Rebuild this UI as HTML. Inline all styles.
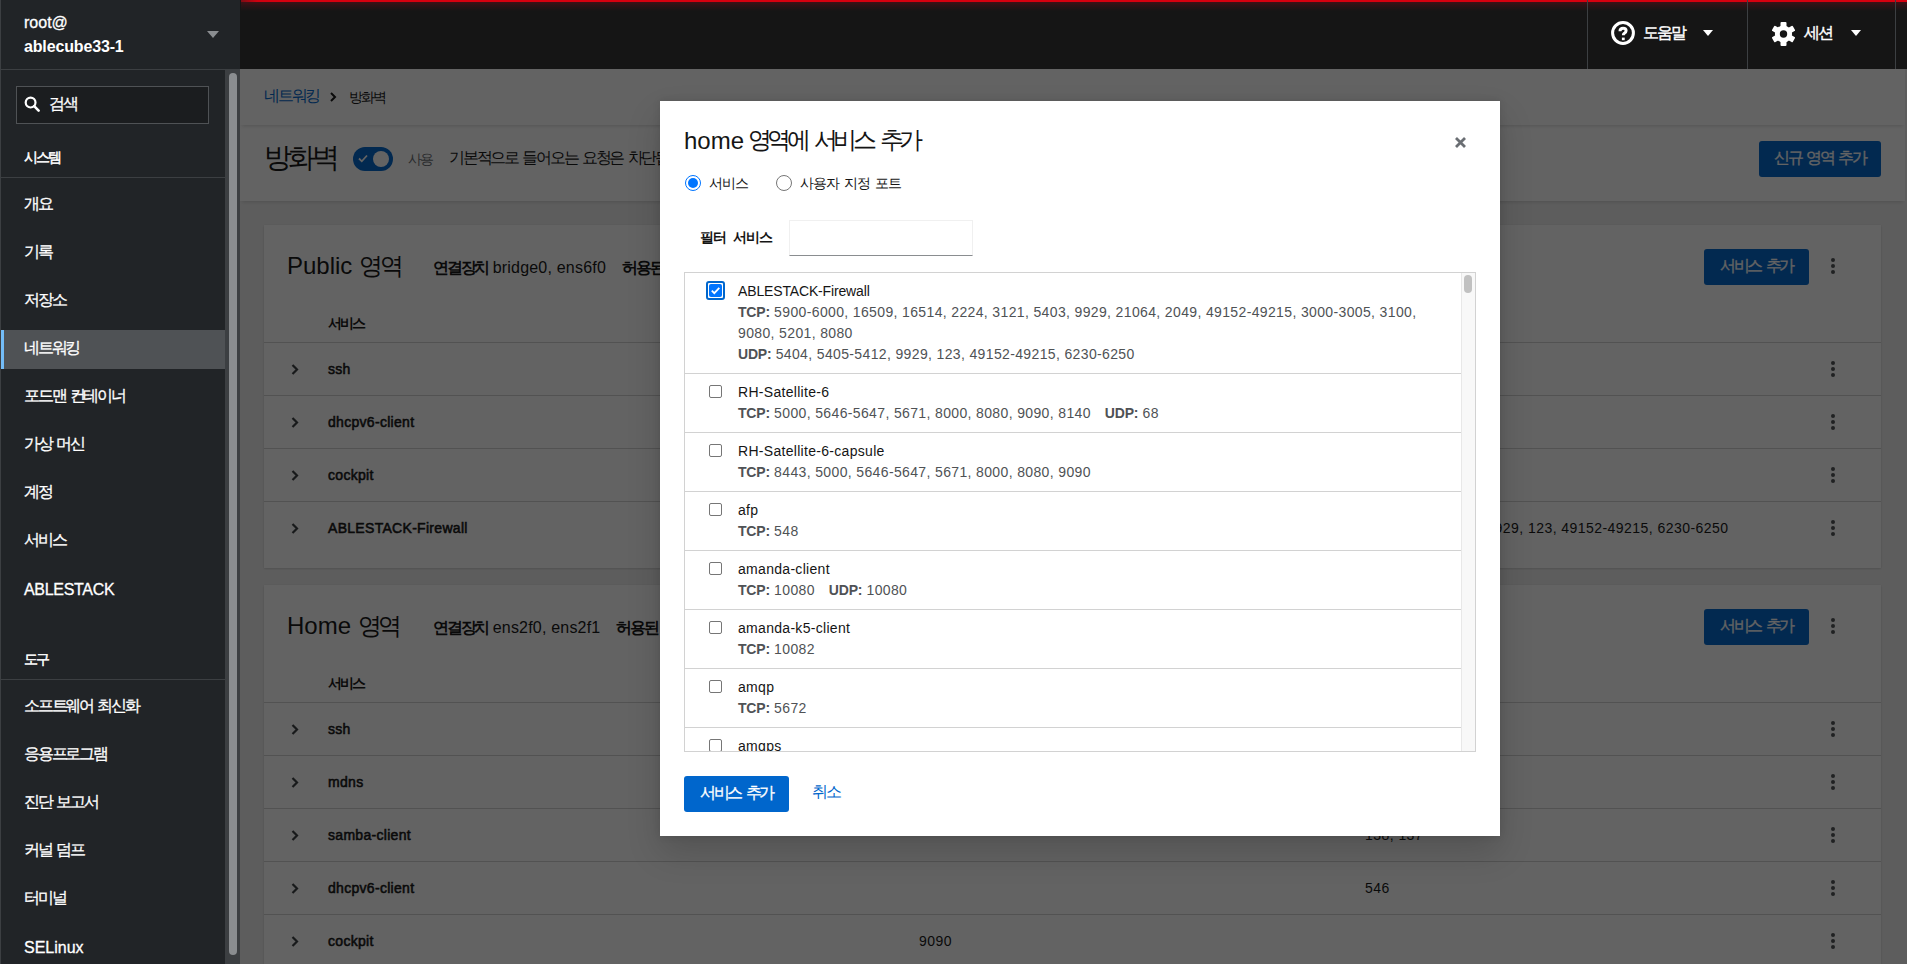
<!DOCTYPE html>
<html><head><meta charset="utf-8">
<style>
*{box-sizing:border-box;margin:0;padding:0}
html,body{width:1907px;height:964px;overflow:hidden;font-family:"Liberation Sans",sans-serif;font-size:14px;color:#151515;background:#f0f0f0}
.abs{position:absolute}
/* sidebar */
#side{position:absolute;left:0;top:0;width:240px;height:964px;background:#212427;color:#fff}
#side .hosthdr{position:absolute;left:0;top:0;width:240px;height:70px;border-bottom:1px solid #3c3f42}
#side .t{position:absolute;white-space:nowrap}
#side .item{position:absolute;left:24px;font-size:16px;color:#fff;white-space:nowrap;line-height:20px;-webkit-text-stroke:0.3px #fff}
#side .sect{position:absolute;left:0;width:225px;border-bottom:1px solid #3c3f42}
/* header */
#hdr{position:absolute;left:240px;top:0;width:1667px;height:69px;background:#151515;overflow:hidden}
#hdr .red{position:absolute;left:1px;top:0;width:100%;height:2px;background:linear-gradient(to right,#7c0c14 0px,#d0000f 16px,#d8000f 40px)}
#hdr .glow{position:absolute;left:1px;top:2px;width:100%;height:9px;background:linear-gradient(to bottom,rgba(210,0,25,0.22),rgba(210,0,25,0.12) 40%,rgba(210,0,25,0) 100%)}
#hdr .div{position:absolute;top:0;width:1px;height:69px;background:#3c3f42}
/* main */
#main{position:absolute;left:240px;top:69px;width:1667px;height:895px;background:#f0f0f0;overflow:hidden;z-index:0}
.sec{position:absolute;left:0;width:1665px;background:#fff;box-shadow:0 3px 4px -2px rgba(3,3,3,0.16)}
.card{position:absolute;left:24px;width:1617px;background:#fff;box-shadow:0 1px 2px 0 rgba(3,3,3,0.12),0 0 2px 0 rgba(3,3,3,0.06)}
.card .row{position:absolute;left:0;width:100%;border-top:1px solid #d2d2d2}
.nm{position:absolute;left:64px;white-space:nowrap;line-height:20px;-webkit-text-stroke:0.55px #151515;letter-spacing:0.3px}
.chev{position:absolute;left:27px}
.kebab{position:absolute;left:1567px;width:4px}
.kebab i{display:block;width:4px;height:4px;border-radius:2px;background:#4f5255;margin-bottom:2px}
.btnp{position:absolute;background:#06c;color:#fff;border-radius:3px;text-align:center;font-size:16px;line-height:36px;white-space:nowrap;-webkit-text-stroke:0.3px #fff}
#backdrop{position:absolute;left:240px;top:69px;width:1667px;height:895px;background:rgba(3,3,3,0.62)}
/* modal */
#modal{position:absolute;left:660px;top:101px;width:840px;height:735px;background:#fff;box-shadow:0 16px 32px 0 rgba(3,3,3,0.16),0 0 8px 0 rgba(3,3,3,0.1)}
#modal .t{position:absolute;white-space:nowrap}
#list{position:absolute;left:24px;top:171px;width:792px;height:480px;border:1px solid #d2d2d2;overflow:hidden}
.li{position:absolute;left:0;width:776px;border-bottom:1px solid #d2d2d2}
.li .cb{position:absolute;left:24px;width:13px;height:13px;border:1px solid #767676;border-radius:2px;background:#fff}
.li .n{position:absolute;left:53px;white-space:nowrap;line-height:21px;color:#151515;letter-spacing:0.3px}
.li .p{position:absolute;left:53px;white-space:nowrap;line-height:21px;color:#4f5255;letter-spacing:0.36px}
.li .p b{letter-spacing:-0.2px}
.li b{color:#4f5255}
.cbf{position:absolute;left:21px;width:19px;height:19px;border:2px solid #0066cc;border-radius:3px;padding:0;}
.cbf svg{position:absolute;left:1px;top:1px}
#main .t{position:absolute;white-space:nowrap}
.ct{font-size:24px;line-height:28px}
.cd{font-size:16px;line-height:20px;letter-spacing:0.2px}
.cd b .k{letter-spacing:-0.14em}
.th{font-size:14px;line-height:20px;font-weight:bold}
.td{font-size:14px;line-height:20px;letter-spacing:0.45px}
.k{letter-spacing:-0.14em}
.mk .k{letter-spacing:-0.07em}
.tt .k{letter-spacing:-0.19em;position:relative;top:-1px}
</style></head><body>

<div id="side">
  <div class="hosthdr">
    <div class="t" style="left:24px;top:13px;font-size:16px;line-height:20px;-webkit-text-stroke:0.3px #fff">root@</div>
    <div class="t" style="left:24px;top:37px;font-size:16px;line-height:20px;font-weight:bold;letter-spacing:-0.15px">ablecube33-1</div>
    <svg class="abs" style="left:207px;top:31px" width="12" height="8" viewBox="0 0 12 8"><path d="M0 0h12L6 7z" fill="#8a8d90"/></svg>
  </div>
  <div class="abs" style="left:16px;top:86px;width:193px;height:38px;background:#1b1d1f;border:1px solid #4f5255"></div>
  <svg class="abs" style="left:24px;top:96px" width="16" height="16" viewBox="0 0 16 16"><circle cx="6.6" cy="6.6" r="4.9" fill="none" stroke="#fff" stroke-width="2.2"/><path d="M10.2 10.2L14.6 14.6" stroke="#fff" stroke-width="2.6" stroke-linecap="round"/></svg>
  <div class="item" style="left:49px;top:94px"><span class="k">검색</span></div>
  <div class="item" style="top:147px;font-size:14px;-webkit-text-stroke:0.5px #fff"><span class="k">시스템</span></div>
  <div class="sect" style="top:177px;height:1px"></div>
  <div class="abs" style="left:0;top:330px;width:225px;height:39px;background:#4f5255;border-left:4px solid #73bcf7"></div>
  <div class="item" style="top:194px"><span class="k">개요</span></div>
  <div class="item" style="top:242px"><span class="k">기록</span></div>
  <div class="item" style="top:290px"><span class="k">저장소</span></div>
  <div class="item" style="top:338px"><span class="k">네트워킹</span></div>
  <div class="item" style="top:386px"><span class="k">포드맨</span> <span class="k">컨테이너</span></div>
  <div class="item" style="top:434px"><span class="k">가상</span> <span class="k">머신</span></div>
  <div class="item" style="top:482px"><span class="k">계정</span></div>
  <div class="item" style="top:530px"><span class="k">서비스</span></div>
  <div class="item" style="top:580px;letter-spacing:-0.3px">ABLESTACK</div>
  <div class="item" style="top:649px;font-size:14px;-webkit-text-stroke:0.5px #fff"><span class="k">도구</span></div>
  <div class="sect" style="top:679px;height:1px"></div>
  <div class="item" style="top:696px"><span class="k">소프트웨어</span> <span class="k">최신화</span></div>
  <div class="item" style="top:744px"><span class="k">응용프로그램</span></div>
  <div class="item" style="top:792px"><span class="k">진단</span> <span class="k">보고서</span></div>
  <div class="item" style="top:840px"><span class="k">커널</span> <span class="k">덤프</span></div>
  <div class="item" style="top:888px"><span class="k">터미널</span></div>
  <div class="item" style="top:938px">SELinux</div>
  <div class="abs" style="left:225px;top:69px;width:15px;height:895px;background:#3c3f42"></div>
  <div class="abs" style="left:0;top:0;width:1px;height:964px;background:#3c3f42"></div>
  <div class="abs" style="left:229px;top:73px;width:8px;height:882px;border-radius:4px;background:#8a8d90"></div>
</div>

<div id="hdr">
  <div class="red"></div><div class="glow"></div>
  <div class="div" style="left:1347px"></div>
  <div class="div" style="left:1507px"></div>
  <div class="div" style="left:1655px"></div>
  <svg class="abs" style="left:1371px;top:21px" width="24" height="24" viewBox="0 0 24 24"><circle cx="12" cy="12" r="10.4" fill="none" stroke="#fff" stroke-width="3"/><path d="M9 10.2c0-1.9 1.3-3 3.1-3 1.8 0 3 1 3 2.6 0 1.3-.8 1.9-1.7 2.4-.6.4-1 .7-1 1.5v.6" fill="none" stroke="#fff" stroke-width="3"/><rect x="10.9" y="16.6" width="2.8" height="2.6" fill="#fff"/></svg>
  <div class="abs" style="left:1403px;top:23px;font-size:16px;line-height:20px;color:#fff;white-space:nowrap;-webkit-text-stroke:0.4px #fff"><span class="k">도움말</span></div>
  <svg class="abs" style="left:1463px;top:30px" width="10" height="7" viewBox="0 0 10 7"><path d="M0 0h10L5 6z" fill="#fff"/></svg>
  <svg class="abs" style="left:1532px;top:22px" width="23" height="24" viewBox="0 0 23 24"><g transform="translate(11.5 12)" fill="#fff"><rect x="-3" y="-12" width="6" height="24" rx="1"/><rect x="-3" y="-12" width="6" height="24" rx="1" transform="rotate(60)"/><rect x="-3" y="-12" width="6" height="24" rx="1" transform="rotate(120)"/><circle r="8.6"/><circle r="3.7" fill="#151515"/></g></svg>
  <div class="abs" style="left:1564px;top:23px;font-size:16px;line-height:20px;color:#fff;white-space:nowrap;-webkit-text-stroke:0.4px #fff"><span class="k">세션</span></div>
  <svg class="abs" style="left:1611px;top:30px" width="10" height="7" viewBox="0 0 10 7"><path d="M0 0h10L5 6z" fill="#fff"/></svg>
</div>

<div id="main">
<div class="sec" style="top:0;height:56px;z-index:2">
  <div class="t" style="left:24px;top:17px;font-size:16px;line-height:20px;color:#06c"><span class="k">네트워킹</span></div>
  <svg class="abs" style="left:90px;top:23px" width="7" height="10" viewBox="0 0 7 10"><path d="M1 1l4 4-4 4" fill="none" stroke="#151515" stroke-width="2"/></svg>
  <div class="t" style="left:109px;top:18px;font-size:14px;line-height:20px"><span class="k">방화벽</span></div>
</div>
<div class="sec" style="top:56px;height:76px">
  <div class="t" style="left:24px;top:18px;font-size:28px;line-height:30px"><span class="k">방화벽</span></div>
  <div class="abs" style="left:113px;top:22px;width:40px;height:24px;border-radius:12px;background:#06c">
    <svg class="abs" style="left:5px;top:7px" width="10" height="9" viewBox="0 0 10 9"><path d="M1 4.5l2.8 2.8L9 1.5" fill="none" stroke="#fff" stroke-width="1.8"/></svg>
    <div class="abs" style="left:20px;top:4px;width:16px;height:16px;border-radius:50%;background:#fff"></div>
  </div>
  <div class="t" style="left:168px;top:24px;font-size:14px;line-height:20px;color:#6a6e73"><span class="k">사용</span></div>
  <div class="t" style="left:209px;top:23px;font-size:16px;line-height:20px"><span class="k">기본적으로</span> <span class="k">들어오는</span> <span class="k">요청은</span> <span class="k">차단됩니다</span>. <span class="k">나가는</span> <span class="k">요청은</span> <span class="k">차단되지</span> <span class="k">않습니다</span>.</div>
  <div class="btnp" style="left:1519px;top:16px;width:122px;height:36px;line-height:34px"><span class="k">신규</span> <span class="k">영역</span> <span class="k">추가</span></div>
</div>
<div class="card" style="top:156px;height:343px">
<div class="t ct" style="left:23px;top:27px">Public <span class="k">영역</span></div>
<div class="t cd" style="left:169px;top:33px"><b><span class="k">연결장치</span></b> bridge0, ens6f0</div>
<div class="t cd" style="left:358px;top:33px"><b><span class="k">허용된</span> <span class="k">주소</span></b> <span class="k">전체</span></div>
<div class="btnp" style="left:1440px;top:24px;width:105px;height:36px;line-height:34px"><span class="k">서비스</span> <span class="k">추가</span></div>
<div class="kebab" style="top:33px"><i></i><i></i><i></i></div>
<div class="t th" style="left:64px;top:88px"><span class="k">서비스</span></div><div class="t th" style="left:655px;top:88px">TCP</div><div class="t th" style="left:1101px;top:88px">UDP</div>
<div class="row" style="top:117px;height:53px"></div>
<svg class="chev" style="top:139px" width="8" height="11" viewBox="0 0 8 11"><path d="M1.5 1L6 5.5 1.5 10" fill="none" stroke="#3c3f42" stroke-width="2.2"/></svg>
<div class="nm" style="top:134px">ssh</div>
<div class="t td" style="left:655px;top:134px">22</div>
<div class="kebab" style="top:136px"><i></i><i></i><i></i></div>
<div class="row" style="top:170px;height:53px"></div>
<svg class="chev" style="top:192px" width="8" height="11" viewBox="0 0 8 11"><path d="M1.5 1L6 5.5 1.5 10" fill="none" stroke="#3c3f42" stroke-width="2.2"/></svg>
<div class="nm" style="top:187px">dhcpv6-client</div>
<div class="t td" style="left:1101px;top:187px">546</div>
<div class="kebab" style="top:189px"><i></i><i></i><i></i></div>
<div class="row" style="top:223px;height:53px"></div>
<svg class="chev" style="top:245px" width="8" height="11" viewBox="0 0 8 11"><path d="M1.5 1L6 5.5 1.5 10" fill="none" stroke="#3c3f42" stroke-width="2.2"/></svg>
<div class="nm" style="top:240px">cockpit</div>
<div class="t td" style="left:655px;top:240px">9090</div>
<div class="kebab" style="top:242px"><i></i><i></i><i></i></div>
<div class="row" style="top:276px;height:53px"></div>
<svg class="chev" style="top:298px" width="8" height="11" viewBox="0 0 8 11"><path d="M1.5 1L6 5.5 1.5 10" fill="none" stroke="#3c3f42" stroke-width="2.2"/></svg>
<div class="nm" style="top:293px">ABLESTACK-Firewall</div>

<div class="t td" style="left:1101px;top:293px">5404, 5405-5412, 9929, 123, 49152-49215, 6230-6250</div>
<div class="kebab" style="top:295px"><i></i><i></i><i></i></div>
</div>
<div class="card" style="top:516px;height:420px">
<div class="t ct" style="left:23px;top:27px">Home <span class="k">영역</span></div>
<div class="t cd" style="left:169px;top:33px"><b><span class="k">연결장치</span></b> ens2f0, ens2f1</div>
<div class="t cd" style="left:352px;top:33px"><b><span class="k">허용된</span> <span class="k">주소</span></b> <span class="k">전체</span></div>
<div class="btnp" style="left:1440px;top:24px;width:105px;height:36px;line-height:34px"><span class="k">서비스</span> <span class="k">추가</span></div>
<div class="kebab" style="top:33px"><i></i><i></i><i></i></div>
<div class="t th" style="left:64px;top:88px"><span class="k">서비스</span></div><div class="t th" style="left:655px;top:88px">TCP</div><div class="t th" style="left:1101px;top:88px">UDP</div>
<div class="row" style="top:117px;height:53px"></div>
<svg class="chev" style="top:139px" width="8" height="11" viewBox="0 0 8 11"><path d="M1.5 1L6 5.5 1.5 10" fill="none" stroke="#3c3f42" stroke-width="2.2"/></svg>
<div class="nm" style="top:134px">ssh</div>
<div class="t td" style="left:655px;top:134px">22</div>
<div class="kebab" style="top:136px"><i></i><i></i><i></i></div>
<div class="row" style="top:170px;height:53px"></div>
<svg class="chev" style="top:192px" width="8" height="11" viewBox="0 0 8 11"><path d="M1.5 1L6 5.5 1.5 10" fill="none" stroke="#3c3f42" stroke-width="2.2"/></svg>
<div class="nm" style="top:187px">mdns</div>
<div class="t td" style="left:1101px;top:187px">5353</div>
<div class="kebab" style="top:189px"><i></i><i></i><i></i></div>
<div class="row" style="top:223px;height:53px"></div>
<svg class="chev" style="top:245px" width="8" height="11" viewBox="0 0 8 11"><path d="M1.5 1L6 5.5 1.5 10" fill="none" stroke="#3c3f42" stroke-width="2.2"/></svg>
<div class="nm" style="top:240px">samba-client</div>
<div class="t td" style="left:1101px;top:240px">138, 137</div>
<div class="kebab" style="top:242px"><i></i><i></i><i></i></div>
<div class="row" style="top:276px;height:53px"></div>
<svg class="chev" style="top:298px" width="8" height="11" viewBox="0 0 8 11"><path d="M1.5 1L6 5.5 1.5 10" fill="none" stroke="#3c3f42" stroke-width="2.2"/></svg>
<div class="nm" style="top:293px">dhcpv6-client</div>
<div class="t td" style="left:1101px;top:293px">546</div>
<div class="kebab" style="top:295px"><i></i><i></i><i></i></div>
<div class="row" style="top:329px;height:53px"></div>
<svg class="chev" style="top:351px" width="8" height="11" viewBox="0 0 8 11"><path d="M1.5 1L6 5.5 1.5 10" fill="none" stroke="#3c3f42" stroke-width="2.2"/></svg>
<div class="nm" style="top:346px">cockpit</div>
<div class="t td" style="left:655px;top:346px">9090</div>
<div class="kebab" style="top:348px"><i></i><i></i><i></i></div>
<div class="row" style="top:382px;height:53px"></div>
<svg class="chev" style="top:404px" width="8" height="11" viewBox="0 0 8 11"><path d="M1.5 1L6 5.5 1.5 10" fill="none" stroke="#3c3f42" stroke-width="2.2"/></svg>
<div class="nm" style="top:399px">x</div>
<div class="kebab" style="top:401px"><i></i><i></i><i></i></div>
</div>
</div>

<div id="backdrop"></div>

<div id="modal">
  <div class="t tt" style="left:24px;top:26px;font-size:24px;line-height:28px;word-spacing:1px"><span style="margin-right:-4px">home</span> <span class="k">영역에</span> <span class="k">서비스</span> <span class="k">추가</span></div>
  <svg class="abs" style="left:795px;top:36px" width="11" height="11" viewBox="0 0 11 11"><path d="M1 1l9 9M10 1l-9 9" stroke="#6a6e73" stroke-width="2.8"/></svg>
  <div class="abs" style="left:25px;top:74px;width:16px;height:16px;border-radius:50%;border:1px solid #0075ff;background:#fff"><div style="position:absolute;left:2px;top:2px;width:10px;height:10px;border-radius:50%;background:#0075ff"></div></div>
  <div class="t mk" style="left:49px;top:72px;font-size:14px;line-height:20px"><span class="k">서비스</span></div>
  <div class="abs" style="left:116px;top:74px;width:16px;height:16px;border-radius:50%;border:1px solid #767676;background:#fff"></div>
  <div class="t mk" style="left:140px;top:72px;font-size:14px;line-height:20px;word-spacing:1px"><span class="k">사용자</span> <span class="k">지정</span> <span class="k">포트</span></div>
  <div class="t mk" style="left:40px;top:126px;font-size:14px;line-height:20px;font-weight:bold;word-spacing:3px"><span class="k">필터</span> <span class="k">서비스</span></div>
  <div class="abs" style="left:129px;top:119px;width:184px;height:36px;border:1px solid #f0f0f0;border-bottom-color:#8a8d90"></div>
  <div id="list">
<div class="li" style="top:0px;height:101px">
<div class="cbf" style="top:8px"><svg width="13" height="13" viewBox="0 0 13 13"><rect x="0" y="0" width="13" height="13" rx="2" fill="#0075ff"/><path d="M2.8 6.6l2.5 2.5 5-5.2" fill="none" stroke="#fff" stroke-width="1.8"/></svg></div>
<div class="n" style="top:8px;letter-spacing:-0.15px">ABLESTACK-Firewall</div>
<div class="p" style="top:29px"><b>TCP:</b> 5900-6000, 16509, 16514, 2224, 3121, 5403, 9929, 21064, 2049, 49152-49215, 3000-3005, 3100,</div>
<div class="p" style="top:50px">9080, 5201, 8080</div>
<div class="p" style="top:71px"><b>UDP:</b> 5404, 5405-5412, 9929, 123, 49152-49215, 6230-6250</div>
</div>
<div class="li" style="top:101px;height:59px">
<div class="cb" style="top:11px"></div>
<div class="n" style="top:8px">RH-Satellite-6</div>
<div class="p" style="top:29px"><b>TCP:</b> 5000, 5646-5647, 5671, 8000, 8080, 9090, 8140<span style="margin-left:14px"><b>UDP:</b> 68</span></div>
</div>
<div class="li" style="top:160px;height:59px">
<div class="cb" style="top:11px"></div>
<div class="n" style="top:8px">RH-Satellite-6-capsule</div>
<div class="p" style="top:29px"><b>TCP:</b> 8443, 5000, 5646-5647, 5671, 8000, 8080, 9090</div>
</div>
<div class="li" style="top:219px;height:59px">
<div class="cb" style="top:11px"></div>
<div class="n" style="top:8px">afp</div>
<div class="p" style="top:29px"><b>TCP:</b> 548</div>
</div>
<div class="li" style="top:278px;height:59px">
<div class="cb" style="top:11px"></div>
<div class="n" style="top:8px">amanda-client</div>
<div class="p" style="top:29px"><b>TCP:</b> 10080<span style="margin-left:14px"><b>UDP:</b> 10080</span></div>
</div>
<div class="li" style="top:337px;height:59px">
<div class="cb" style="top:11px"></div>
<div class="n" style="top:8px">amanda-k5-client</div>
<div class="p" style="top:29px"><b>TCP:</b> 10082</div>
</div>
<div class="li" style="top:396px;height:59px">
<div class="cb" style="top:11px"></div>
<div class="n" style="top:8px">amqp</div>
<div class="p" style="top:29px"><b>TCP:</b> 5672</div>
</div>
<div class="li" style="top:455px;height:59px">
<div class="cb" style="top:11px"></div>
<div class="n" style="top:8px">amqps</div>
<div class="p" style="top:29px"><b>TCP:</b> 5671</div>
</div>
    <div class="abs" style="left:776px;top:0;width:15px;height:480px;background:#f8f8f8;border-left:1px solid #e8e8e8"></div>
    <div class="abs" style="left:779px;top:2px;width:8px;height:18px;border-radius:4px;background:#c1c1c1"></div>
  </div>
  <div class="btnp" style="left:24px;top:675px;width:105px;height:36px;line-height:34px"><span class="k">서비스</span> <span class="k">추가</span></div>
  <div class="t" style="left:152px;top:681px;font-size:16px;line-height:20px;color:#06c"><span class="k">취소</span></div>
</div>

</body></html>
